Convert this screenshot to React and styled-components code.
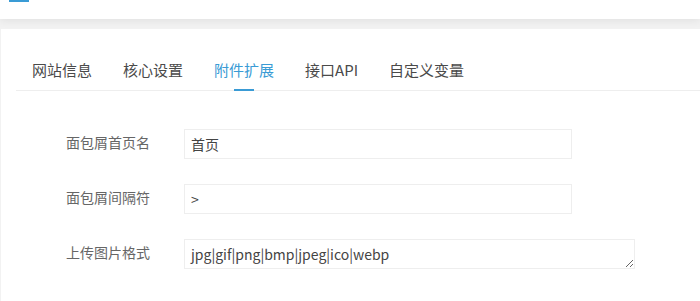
import React from 'react';
import styled, { createGlobalStyle } from "styled-components";

const GlobalStyle = createGlobalStyle`
	html, body {
		margin: 0;
		padding: 0;
		background-color: #f2f2f2;
		font-family: "Noto Sans CJK SC", "Noto Sans", sans-serif;
		overflow: hidden;
	}
`

const Header = styled.div`
	height: 19px;
	background-color: white;
	box-shadow: 0 2px 8px rgba(0, 0, 0, 0.07);
	position: relative;
	z-index: 1;
`

const Logo = styled.div`
	width: 20px;
	height: 2px;
	margin-left: 9px;
	background-color: #3a9bd5;
`

const Body = styled.div`
	padding: 10px 0 0 1px;
`

const Card = styled.div`
	box-sizing: border-box;
	min-height: 272px;
	background-color: white;
	padding: 21px 0 0 15px;
`

const Tabs = styled.ul`
	display: flex;
	margin: 0;
	padding: 0;
	list-style: none;
	height: 40px;
	border-bottom: 1px solid #eeeeee;
`

const Tab = styled.li`
	position: relative;
	padding: 0 15px 0 16px;
	line-height: 40px;
	font-size: 15px;
	color: ${(p) => (p.active ? "#3a9bd5" : "#4a4a4a")};
	cursor: pointer;

	&::after {
		content: "";
		display: ${(p) => (p.active ? "block" : "none")};
		position: absolute;
		left: 50%;
		bottom: -1px;
		width: 20px;
		height: 2px;
		margin-left: -10px;
		background-color: #3a9bd5;
	}
`

const Form = styled.div`
	padding-top: 38px;
	display: flex;
	flex-direction: column;
	gap: 25px;
`

const Row = styled.div`
	display: flex;
	align-items: center;
`

const Label = styled.label`
	width: 150px;
	padding-left: 50px;
	box-sizing: border-box;
	margin-right: 18px;
	margin-top: -4px;
	font-size: 14px;
	color: #666;
`

const Input = styled.input`
	width: ${(p) => p.width}px;
	height: 30px;
	box-sizing: border-box;
	padding: 0 6px;
	border: 1px solid #eeeeee;
	outline: none;
	font-family: inherit;
	font-size: 14px;
	color: #444;
	background: white;
`

const TextArea = styled.textarea`
	width: ${(p) => p.width}px;
	height: 30px;
	box-sizing: border-box;
	padding: 4px 6px 0;
	border: 1px solid #eeeeee;
	outline: none;
	font-family: inherit;
	font-size: 14px;
	line-height: 20px;
	color: #444;
	background: white;
	overflow: hidden;
`

const tabs = ["网站信息", "核心设置", "附件扩展", "接口API", "自定义变量"];

export default function App() {
	return (
		<>
			<GlobalStyle />
			<Header>
				<Logo />
			</Header>
			<Body>
				<Card>
					<Tabs>
						{tabs.map((t) => (
							<Tab key={t} active={t === "附件扩展"}>{t}</Tab>
						))}
					</Tabs>
					<Form>
						<Row>
							<Label>面包屑首页名</Label>
							<Input width={388} defaultValue="首页" />
						</Row>
						<Row>
							<Label>面包屑间隔符</Label>
							<Input width={388} defaultValue=">" />
						</Row>
						<Row>
							<Label>上传图片格式</Label>
							<TextArea width={451} defaultValue="jpg|gif|png|bmp|jpeg|ico|webp" />
						</Row>
					</Form>
				</Card>
			</Body>
		</>
	);
}
